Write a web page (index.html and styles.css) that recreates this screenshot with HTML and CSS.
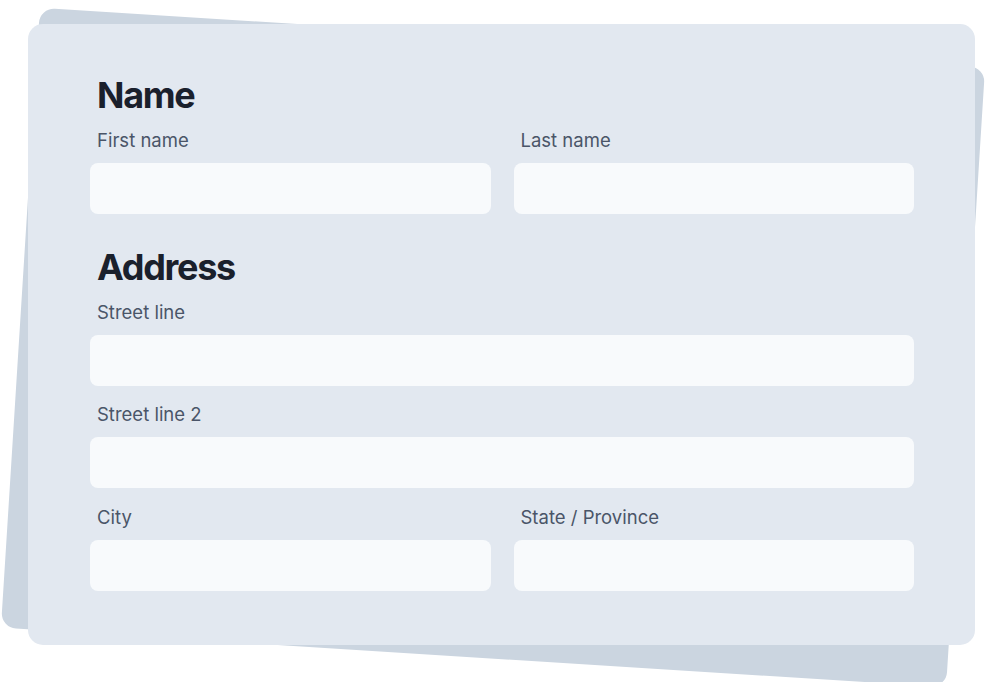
FILE: index.html
```html
<!DOCTYPE html>
<html lang="en">
<head>
<meta charset="utf-8">
<title>Address form</title>
<link rel="stylesheet" href="styles.css">
</head>
<body>
<div class="stage">
  <div class="card-wrap">
    <div class="card-back"></div>
    <form class="card">
      <h2 class="section-title">Name</h2>
      <div class="row two">
        <label class="field">
          <span class="label">First name</span>
          <input class="input" type="text">
        </label>
        <label class="field">
          <span class="label">Last name</span>
          <input class="input" type="text">
        </label>
      </div>

      <h2 class="section-title section-gap">Address</h2>
      <div class="row">
        <label class="field">
          <span class="label">Street line</span>
          <input class="input" type="text">
        </label>
      </div>
      <div class="row row-gap">
        <label class="field">
          <span class="label">Street line 2</span>
          <input class="input" type="text">
        </label>
      </div>
      <div class="row two row-gap row-last">
        <label class="field">
          <span class="label">City</span>
          <input class="input" type="text">
        </label>
        <label class="field">
          <span class="label">State / Province</span>
          <input class="input" type="text">
        </label>
      </div>
    </form>
  </div>
</div>
</body>
</html>
```
FILE: styles.css
```css
* { box-sizing: border-box; }
html, body {
  margin: 0;
  padding: 0;
  background: #ffffff;
  overflow: hidden;
}
body {
  font-family: Inter, "Noto Sans", sans-serif;
  width: 988px;
  height: 682px;
}
.stage {
  padding: 24px 0 0 28px;
}
.card-wrap {
  position: relative;
  width: 947px;
}
.card-back {
  position: absolute;
  inset: 0;
  background: #cbd5e0;
  border-radius: 15px;
  transform: translate(-8.5px, 13px) rotate(3.6deg);
  z-index: 0;
}
.card {
  position: relative;
  z-index: 1;
  margin: 0;
  background: #e2e8f0;
  border-radius: 15px;
  padding: 49px 61px 54px 62px;
}
.section-title {
  margin: 0 0 11px 7px;
  font-size: 36px;
  line-height: 44px;
  font-weight: 700;
  color: #1a202c;
  letter-spacing: -1.3px;
}
.section-gap { margin-top: 31px; }
.row {
  display: grid;
  grid-template-columns: 1fr;
}
.row.two {
  grid-template-columns: 1fr 1fr;
  column-gap: 23px;
}
.row-gap { margin-top: 16px; }
.row-last { margin-top: 17px; }
.field {
  display: flex;
  flex-direction: column;
}
.label {
  display: block;
  padding-left: 7px;
  margin-bottom: 11px;
  font-size: 18.5px;
  line-height: 24px;
  font-weight: 400;
  color: #4a5568;
}
.input {
  display: block;
  width: 100%;
  height: 51px;
  border: 0;
  border-radius: 8px;
  background: #f8fafc;
  padding: 0 16px;
  font: inherit;
  outline: none;
}
```
